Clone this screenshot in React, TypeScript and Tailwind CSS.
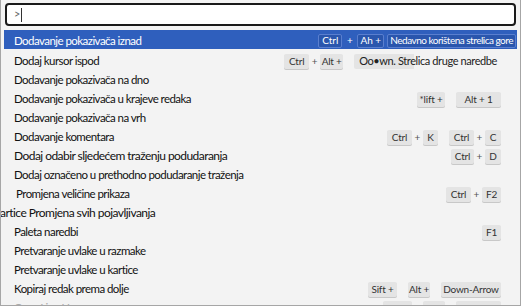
import React from 'react';

type Key = { label: string; w: number; overflow?: boolean };

interface Row {
  title: string;
  keys?: (Key | 'plus' | 'gap')[];
  big?: boolean;
  indent?: number;
  dim?: boolean;
}

const rows: Row[] = [
  {
    title: 'Dodaj kursor ispod',
    keys: [{ label: 'Ctrl', w: 25 }, 'plus', { label: 'Alt +', w: 23 }, 'gap', { label: 'Oo•wn. Strelica druge naredbe', w: 60, overflow: true }],
  },
  { title: 'Dodavanje pokazivača na dno' },
  {
    title: 'Dodavanje pokazivača u krajeve redaka',
    keys: [{ label: '*lift +', w: 28 }, 'gap', { label: 'Alt + 1', w: 45 }],
  },
  { title: 'Dodavanje pokazivača na vrh' },
  {
    title: 'Dodavanje komentara',
    keys: [{ label: 'Ctrl', w: 25 }, 'plus', { label: 'K', w: 15 }, 'gap', { label: 'Ctrl', w: 25 }, 'plus', { label: 'C', w: 16 }],
  },
  {
    title: 'Dodaj odabir sljedećem traženju podudaranja',
    big: true,
    keys: [{ label: 'Ctrl', w: 23 }, 'plus', { label: 'D', w: 16 }],
  },
  { title: 'Dodaj označeno u prethodno podudaranje traženja' },
  {
    title: 'Promjena veličine prikaza',
    indent: 2,
    keys: [{ label: 'Ctrl', w: 25 }, 'plus', { label: 'F2', w: 19 }],
  },
  { title: 'artice Promjena svih pojavljivanja', big: true, indent: -14 },
  { title: 'Paleta naredbi', keys: [{ label: 'F1', w: 19 }] },
  { title: 'Pretvaranje uvlake u razmake' },
  { title: 'Pretvaranje uvlake u kartice' },
  {
    title: 'Kopiraj redak prema dolje',
    keys: [{ label: 'Sift +', w: 29 }, 'gap', { label: 'Alt +', w: 22 }, 'gap', { label: 'Down-Arrow', w: 60 }],
  },
  {
    title: 'Copy Line Up',
    dim: true,
    keys: [{ label: 'Shift +', w: 29 }, 'plus', { label: 'Alt +', w: 22 }, 'plus', { label: 'Up-Arrow', w: 45 }],
  },
];

const Keycap = ({ k }: { k: Key }) =>
  k.overflow ? (
    // the label runs past the end of its key in the original
    <span className="flex h-[15px] items-center whitespace-nowrap rounded-[2px] bg-[linear-gradient(to_right,#e4e4e4_60px,transparent_60px)] pl-[5px] pr-[4px] text-[11px] tracking-[-0.4px] text-[#222]">
      {k.label}
    </span>
  ) : (
    <span
      className="flex h-[15px] items-center justify-center whitespace-nowrap rounded-[2px] bg-[#e4e4e4] text-[10px] tracking-[-0.2px] text-[#333] shadow-[0_1px_0_#c8c8c8]"
      style={{ width: k.w }}
    >
      {k.label}
    </span>
  );

const Keys = ({ keys }: { keys: Row['keys'] }) => (
  <div className="flex items-center">
    {keys!.map((k, i) =>
      k === 'plus' ? (
        <span key={i} className="w-[11px] text-center text-[10px] text-[#555]">+</span>
      ) : k === 'gap' ? (
        <span key={i} className="w-[11px]" />
      ) : (
        <Keycap key={i} k={k} />
      )
    )}
  </div>
);

export default function App() {
  return (
    <div className="h-[307px] w-[522px] overflow-hidden bg-white" style={{ fontFamily: 'Lato, "Segoe UI", sans-serif' }}>
      <div className="h-[306px] w-[521px] overflow-hidden border border-t-0 border-[#a6a6a6] bg-[#f3f3f3]">
        <div className="px-[4px] pt-[3px]">
          <div className="flex h-[23px] items-center rounded-[4px] border-2 border-[#1a1a1a] bg-white pl-[7px] text-[11px] text-[#666]">
            <span>&gt;</span>
            <span className="ml-[1px] h-[14px] w-px bg-[#333]" />
          </div>
        </div>
        <div className="mt-[4px] flex flex-col">
          <div className="mx-[3px] flex h-[19px] items-center justify-between bg-[#2f5fbd] pl-[10px] pr-[1px] pt-[2px] text-white">
            <span className="text-[11.5px] tracking-[-0.55px]">Dodavanje pokazivača iznad</span>
            <div className="flex items-center text-[10px]">
              <span className="flex h-[14px] w-[24px] items-center justify-center rounded-[2px] border border-[#5a7fcf] bg-[#2a56ad]">Ctrl</span>
              <span className="w-[15px] text-center">+</span>
              <span className="flex h-[14px] w-[27px] items-center justify-center rounded-[2px] border border-[#5a7fcf] bg-[#2a56ad]">Ah +</span>
              <span className="ml-[3px] flex h-[14px] items-center whitespace-nowrap rounded-[2px] border border-[#5a7fcf] bg-[#2a56ad] px-[2px] text-[10px] tracking-[-0.5px]">
                Nedavno korištena strelica gore
              </span>
            </div>
          </div>
          {rows.map((r, i) => (
            <div key={i} className="flex h-[19px] items-center justify-between pl-[13px] pr-[19px] pt-[5px]">
              <span
                className={`whitespace-nowrap ${r.big ? 'text-[12px]' : 'text-[11.5px]'} tracking-[-0.55px] ${
                  r.dim ? 'text-[#aaa]' : 'text-[#111]'
                }`}
                style={{ marginLeft: r.indent ?? 0 }}
              >
                {r.title}
              </span>
              {r.keys && <Keys keys={r.keys} />}
            </div>
          ))}
        </div>
      </div>
    </div>
  );
}
